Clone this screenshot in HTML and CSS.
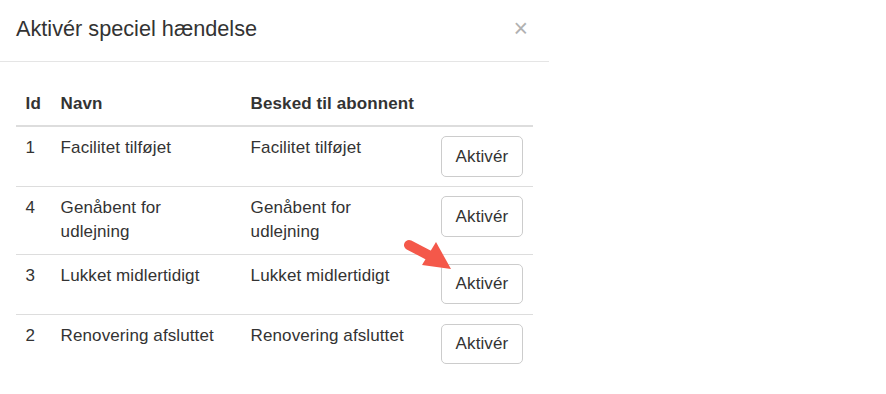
FILE: index.html
```html
<!DOCTYPE html>
<html lang="da">
<head>
<meta charset="utf-8">
<title>Aktivér speciel hændelse</title>
<link rel="stylesheet" href="styles.css">
</head>
<body>
<div class="modal">
  <div class="modal-header">
    <h4 class="modal-title">Aktivér speciel hændelse</h4>
    <button class="close" type="button">×</button>
  </div>
  <div class="modal-body">
    <table class="table">
      <colgroup>
        <col class="col-id">
        <col class="col-name">
        <col class="col-msg">
        <col class="col-btn">
      </colgroup>
      <thead>
        <tr><th>Id</th><th>Navn</th><th>Besked til abonnent</th><th></th></tr>
      </thead>
      <tbody>
        <tr><td>1</td><td>Facilitet tilføjet</td><td>Facilitet tilføjet</td><td><button class="btn" type="button">Aktivér</button></td></tr>
        <tr><td>4</td><td>Genåbent for udlejning</td><td>Genåbent for udlejning</td><td><button class="btn" type="button">Aktivér</button></td></tr>
        <tr><td>3</td><td>Lukket midlertidigt</td><td>Lukket midlertidigt</td><td><button class="btn" type="button">Aktivér</button></td></tr>
        <tr><td>2</td><td>Renovering afsluttet</td><td>Renovering afsluttet</td><td><button class="btn" type="button">Aktivér</button></td></tr>
      </tbody>
    </table>
  </div>
</div>
<svg class="arrow" width="886" height="394" viewBox="0 0 886 394">
  <line x1="409" y1="245" x2="432" y2="257" stroke="#f4584a" stroke-width="10" stroke-linecap="round"/>
  <polygon points="436,242 451,269 422,265" fill="#f4584a"/>
</svg>
</body>
</html>
```
FILE: styles.css
```css
html, body {
  margin: 0;
  padding: 0;
  background: #fff;
}
body {
  font-family: "Liberation Sans", Arial, sans-serif;
  font-size: 17px;
  line-height: 24px;
  letter-spacing: 0.1px;
  color: #333;
  position: relative;
  width: 886px;
  height: 394px;
  overflow: hidden;
}
.modal {
  width: 549px;
}
.modal-header {
  display: flex;
  align-items: center;
  justify-content: space-between;
  padding: 14px 16px 18px 16px;
  border-bottom: 1px solid #e5e5e5;
}
.modal-title {
  margin: 0;
  font-size: 21.7px;
  font-weight: normal;
  line-height: 29px;
  letter-spacing: 0;
  color: #333;
}
.close {
  background: none;
  border: 0;
  padding: 0;
  margin: 0 5px 0 0;
  font-family: "Liberation Sans", Arial, sans-serif;
  font-size: 25px;
  font-weight: normal;
  line-height: 1;
  color: #000;
  opacity: 0.3;
}
.modal-body {
  padding: 20px 16px 16px 16px;
}
.table {
  width: 517px;
  border-collapse: collapse;
  border-spacing: 0;
  table-layout: fixed;
}
.col-id { width: 35px; }
.col-name { width: 190px; }
.col-msg { width: 190px; }
.col-btn { width: 102px; }
.table th,
.table td {
  padding: 9.6px;
  text-align: left;
  vertical-align: top;
  line-height: 24px;
}
.table td {
  padding-top: 9.3px;
  padding-bottom: 9.3px;
}
.table th {
  font-weight: bold;
  vertical-align: bottom;
  border-bottom: 2.4px solid #ddd;
}
.table tbody tr + tr td {
  border-top: 1px solid #ddd;
}
.btn {
  font-family: "Liberation Sans", Arial, sans-serif;
  font-size: 17px;
  line-height: 24px;
  letter-spacing: 0.1px;
  color: #333;
  background: #fff;
  border: 1px solid #ccc;
  border-radius: 5px;
  padding: 7.2px 14px;
  margin: 0;
}
.arrow {
  position: absolute;
  left: 0;
  top: 0;
  pointer-events: none;
}
```
